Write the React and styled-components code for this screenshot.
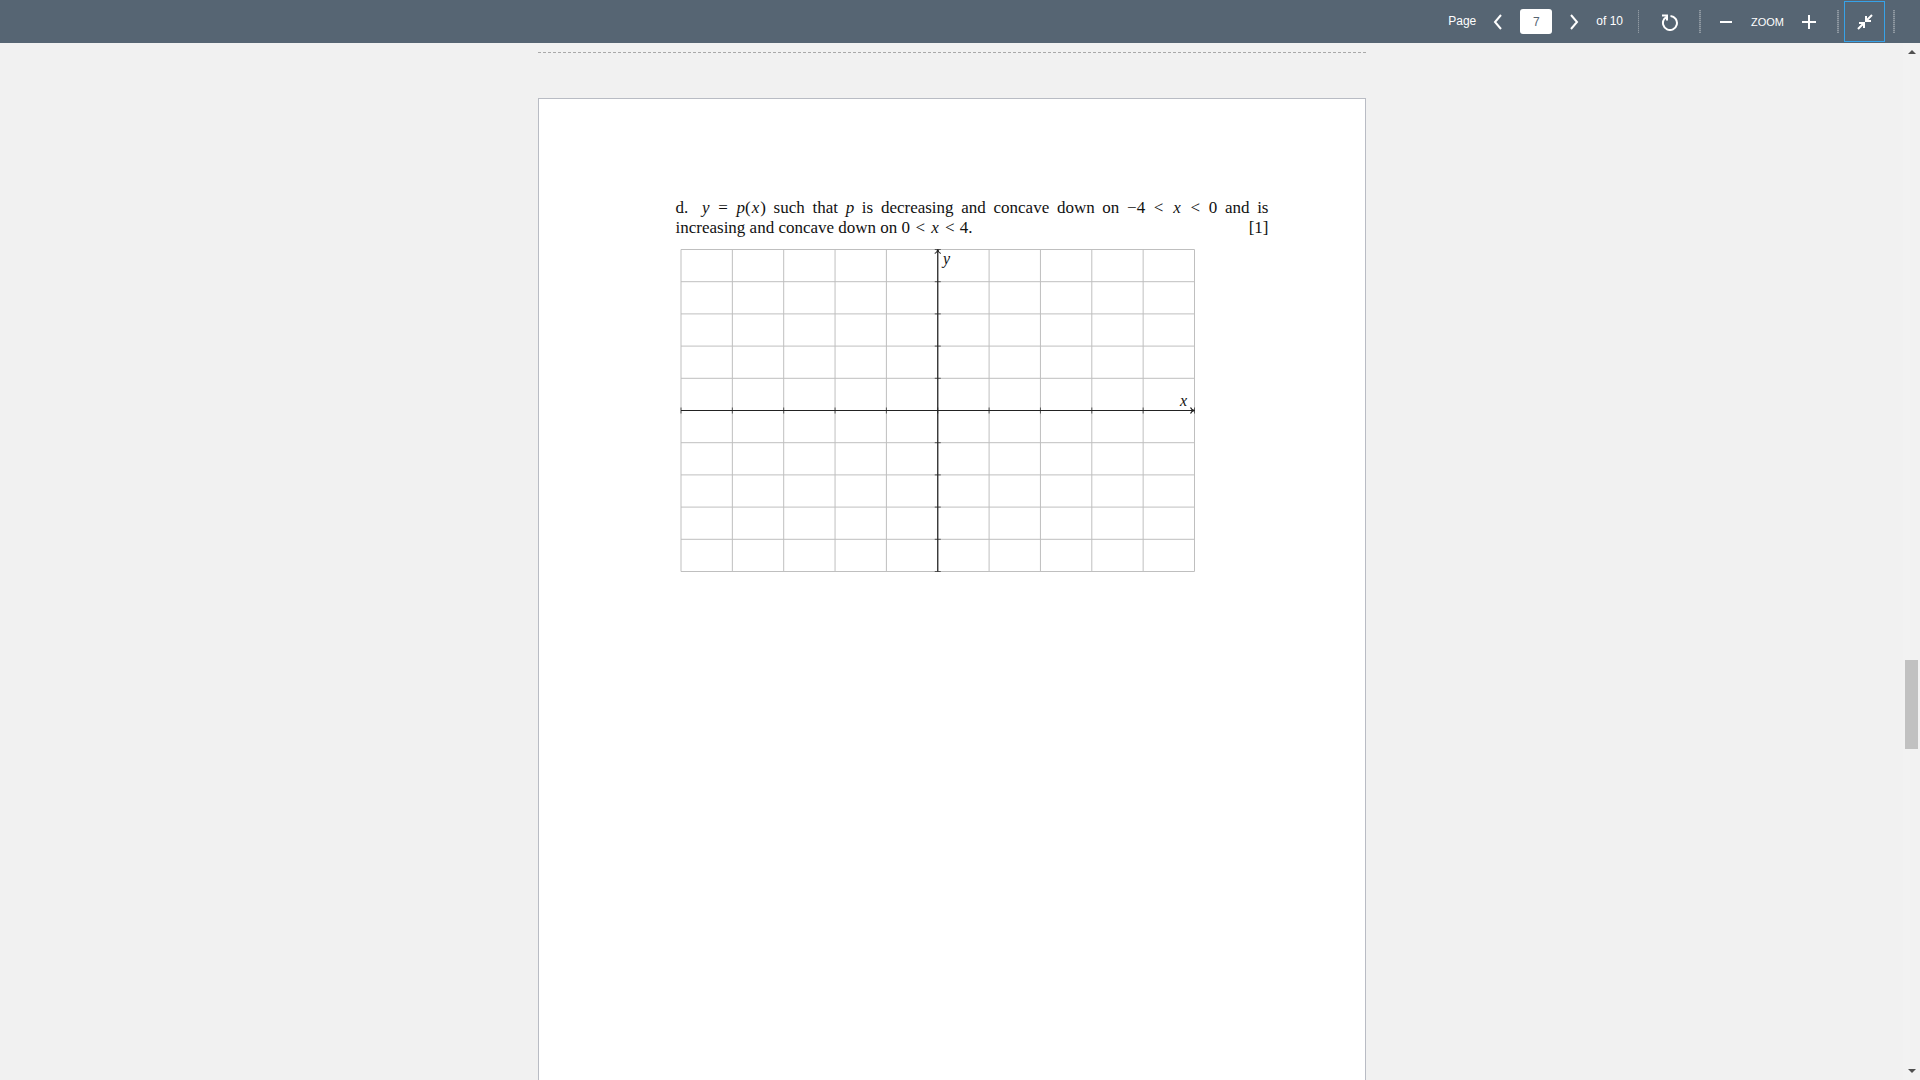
import React from "react";
import styled, { createGlobalStyle } from "styled-components";

const GlobalStyle = createGlobalStyle`
  * { box-sizing: border-box; }
  html, body, #root { height: 100%; }
  body {
    margin: 0;
    overflow: hidden;
    background: #f1f1f1;
    font-family: "Liberation Sans", Arial, sans-serif;
  }
`;

const Viewer = styled.div`
  display: flex;
  flex-direction: column;
  height: 100vh;
`;

const Toolbar = styled.header`
  display: flex;
  flex: none;
  align-items: center;
  justify-content: flex-end;
  height: 43px;
  padding-right: 17px;
  background: #566573;
  color: #fff;
  font-size: 12px;
`;

const Group = styled.div`
  display: flex;
  align-items: center;
  padding: 0 ${(p) => p.$pad || 0}px;
`;

const PageLabel = styled.label`
  line-height: 16px;
  padding-bottom: 2px;
`;

const PageCount = styled.span`
  line-height: 16px;
  padding: 0 11px 2px 0;
`;

const IconButton = styled.button`
  display: flex;
  align-items: center;
  justify-content: center;
  width: ${(p) => p.$width || 44}px;
  height: 41px;
  padding: 0;
  border: 1px solid ${(p) => (p.$active ? "#36a2e8" : "transparent")};
  background: none;
  color: #fff;
  cursor: pointer;
`;

const PageInput = styled.input`
  width: 32px;
  height: 25px;
  padding: 0;
  border: 0;
  border-radius: 3px;
  background: #fff;
  color: #566573;
  font: 12px "Liberation Sans", Arial, sans-serif;
  text-align: center;
`;

const Divider = styled.span`
  width: ${(p) => p.$thick || 2}px;
  height: 23px;
  background: repeating-linear-gradient(#8f99a2 0 1px, #6a7783 1px 2px);
`;

const ZoomLabel = styled.span`
  font-size: 11px;
  line-height: 16px;
`;

const Body = styled.div`
  display: flex;
  flex: 1;
  min-height: 0;
`;

const Scroller = styled.main`
  display: flex;
  flex: 1;
  flex-direction: column;
  align-items: center;
  min-width: 0;
  padding-top: 9px;
  overflow: hidden;
`;

const PageBreak = styled.hr`
  flex: none;
  width: 100%;
  max-width: 828px;
  height: 1px;
  margin: 0 0 45px;
  border: 0;
  background: repeating-linear-gradient(90deg, #a9a9a9 0 3px, transparent 3px 5px);
`;

const Sheet = styled.article`
  flex: none;
  width: 100%;
  max-width: 828px;
  min-height: 1072px;
  padding: 99px 96px 98px 137px;
  border: 1px solid #b9bcc4;
  background: #fff;
`;

const Question = styled.div`
  color: #111;
  font: 17px/20px "Liberation Serif", "Times New Roman", serif;
`;

const Line = styled.p`
  display: flex;
  justify-content: space-between;
  margin: 0;
`;

const Justified = styled.span`
  flex: 1;
  text-align: justify;
  text-align-last: justify;
`;

const PartLabel = styled.span`
  margin-right: 6px;
`;

const Rel = styled.span`
  margin: 0 1px;
`;

const Variable = styled.i`
  margin: 0 1px;
`;

const Graph = styled.svg`
  display: block;
  width: 516px;
  height: 325px;
  margin: 10px 0 0 4px;
  overflow: visible;
`;

const AxisLabel = styled.text`
  font: italic 16px "Liberation Serif", "Times New Roman", serif;
  fill: #111;
`;

const ScrollTrack = styled.div`
  display: flex;
  flex: none;
  flex-direction: column;
  align-items: center;
  width: 17px;
  padding: 7px 0;
  background: #f2f2f2;
`;

const ScrollArrow = styled.span`
  border: 4px solid transparent;
  border-top: ${(p) => (p.$up ? 0 : "4px solid #505050")};
  border-bottom: ${(p) => (p.$up ? "4px solid #505050" : 0)};
`;

const ScrollSpace = styled.span`
  flex: ${(p) => p.$grow} 0 0;
`;

const ScrollThumb = styled.span`
  width: 13px;
  height: 89px;
  background: #c1c1c1;
`;

function Chevron({ points }) {
  return (
    <svg width="10" height="16" viewBox="0 0 10 16" fill="none" stroke="currentColor" strokeWidth="2">
      <polyline points={points} />
    </svg>
  );
}

function ReloadIcon() {
  return (
    <svg width="18" height="18" viewBox="0 0 18 18" fill="none" stroke="currentColor" strokeWidth="2">
      <path d="M9.500 3A7 7 0 1 1 3.200 6L6 3.500" />
      <path d="M1 2.500H6V7.500" />
    </svg>
  );
}

function ShrinkIcon() {
  return (
    <svg width="16" height="16" viewBox="0 0 16 16" fill="none" stroke="currentColor" strokeWidth="2">
      <path d="M15 1L10 6M1 15L6 10" />
      <path d="M9 2V7H14M2 9H7V14" />
    </svg>
  );
}

const steps = Array.from({ length: 11 }, (_, i) => i);
const colX = (i) => 1 + i * 51.35;
const rowY = (i) => 1.5 + i * 32.2;

function BlankGraph() {
  return (
    <Graph viewBox="0 0 516 325" role="img" aria-label="Blank coordinate grid">
      <g stroke="#bfbfbf" strokeWidth="1">
        {steps.map((i) => (
          <path key={i} d={`M${colX(i)} ${rowY(0)}V${rowY(10)}M${colX(0)} ${rowY(i)}H${colX(10)}`} />
        ))}
      </g>
      <g stroke="#555" strokeWidth="1">
        {steps.map((i) => (
          <path key={i} d={`M${colX(i)} ${rowY(5) - 3}v6M${colX(5) - 3} ${rowY(i)}h6`} />
        ))}
      </g>
      <g stroke="#222" strokeWidth="1.2" fill="none">
        <path d={`M${colX(0)} ${rowY(5)}H${colX(10)}M${colX(5)} ${rowY(10)}V${rowY(0)}`} />
        <path d={`M${colX(10) - 4} ${rowY(5) - 3}q1 2.5 4 3q-3 .5-4 3M${colX(5) - 3} ${rowY(0) + 4}q2.5-1 3-4q.5 3 3 4`} />
      </g>
      <AxisLabel x="263" y="16">y</AxisLabel>
      <AxisLabel x="500" y="158">x</AxisLabel>
    </Graph>
  );
}

export default function App() {
  return (
    <Viewer>
      <GlobalStyle />
      <Toolbar>
        <Group>
          <PageLabel htmlFor="page">Page</PageLabel>
          <IconButton aria-label="Previous page"><Chevron points="8,1 2,8 8,15" /></IconButton>
          <PageInput id="page" defaultValue="7" />
          <IconButton aria-label="Next page"><Chevron points="2,1 8,8 2,15" /></IconButton>
          <PageCount>of 10</PageCount>
        </Group>
        <Group $pad={4}><Divider $thick={1} /></Group>
        <IconButton aria-label="Rotate" $width={54}><ReloadIcon /></IconButton>
        <Group $pad={2}><Divider /></Group>
        <Group>
          <IconButton aria-label="Zoom out" $width={46}>
            <svg width="12" height="2"><rect width="12" height="2" fill="currentColor" /></svg>
          </IconButton>
          <Group $pad={2}><ZoomLabel>ZOOM</ZoomLabel></Group>
          <IconButton aria-label="Zoom in" $width={46}>
            <svg width="14" height="14" viewBox="0 0 14 14" stroke="currentColor" strokeWidth="2"><path d="M7 0V14M0 7H14" /></svg>
          </IconButton>
        </Group>
        <Group $pad={5}><Divider /></Group>
        <IconButton aria-label="Exit full screen" $width={41} $active><ShrinkIcon /></IconButton>
        <Group $pad={8}><Divider /></Group>
      </Toolbar>
      <Body>
        <Scroller>
          <PageBreak />
          <Sheet>
            <Question>
              <Line>
                <Justified>
                  <PartLabel>d.</PartLabel> <i>y</i> <Rel>=</Rel> <i>p</i>(<Variable>x</Variable>) such that <i>p</i> is decreasing and concave down on −4 <Rel>&lt;</Rel> <Variable>x</Variable> <Rel>&lt;</Rel> 0 and is
                </Justified>
              </Line>
              <Line>
                <span>increasing and concave down on 0 <Rel>&lt;</Rel> <Variable>x</Variable> <Rel>&lt;</Rel> 4.</span>
                <span>[1]</span>
              </Line>
            </Question>
            <BlankGraph />
          </Sheet>
        </Scroller>
        <ScrollTrack>
          <ScrollArrow $up />
          <ScrollSpace $grow={604} />
          <ScrollThumb />
          <ScrollSpace $grow={319} />
          <ScrollArrow />
        </ScrollTrack>
      </Body>
    </Viewer>
  );
}
